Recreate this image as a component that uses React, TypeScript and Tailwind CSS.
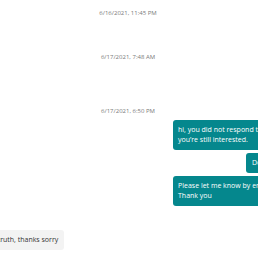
export default function App() {
  const ts = "text-center text-[6px] leading-[8px] text-[#7a7a7a]";
  const right =
    "self-end whitespace-nowrap overflow-hidden rounded-[3px] bg-[#05878d] px-[5px] py-[5px] text-[7px] leading-[10px] text-white";
  return (
    <div
      className="h-[258px] w-[258px] overflow-hidden bg-white"
      style={{ fontFamily: '"Open Sans", sans-serif' }}
    >
      <div className="ml-[-72px] flex w-[400px] flex-col px-2">
        <div className={`${ts} mt-[9px]`}>6/16/2021, 11:45 PM</div>
        <div className={`${ts} mt-[36px]`}>6/17/2021, 7:48 AM</div>
        <div className={`${ts} mt-[46px]`}>6/17/2021, 6:50 PM</div>
        <div className={`${right} mt-[5px] w-[147px]`}>
          hi, you did not respond to my last message,
          <br />
          you’re still interested.
        </div>
        <div className={`${right} mt-[3px] pl-[6px]`}>Do you still want it?</div>
        <div className={`${right} mt-[3px] w-[147px]`}>
          Please let me know by email if you are still
          <br />
          Thank you
        </div>
        <div className="mt-[24px] self-start whitespace-nowrap rounded-[3px] bg-[#f3f3f3] px-[6px] py-[5px] text-[7px] leading-[10px] text-[#333333]">
          Ok I told you the truth, thanks sorry
        </div>
      </div>
    </div>
  );
}
